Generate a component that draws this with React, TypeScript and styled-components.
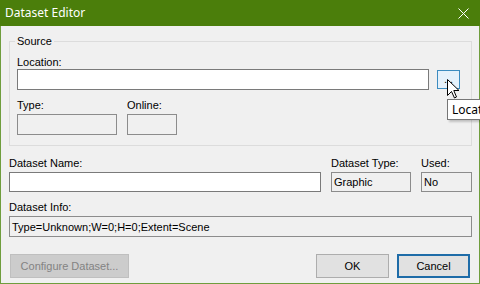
import styled, { createGlobalStyle } from "styled-components";

const Global = createGlobalStyle`
  html, body {
    margin: 0;
    padding: 0;
    overflow: hidden;
    background: #f0f0f0;
  }
`;

const Screen = styled.div`
  position: relative;
  width: 480px;
  height: 284px;
  overflow: hidden;
`;

const Window = styled.div`
  width: 480px;
  height: 284px;
  display: flex;
  flex-direction: column;
  font-family: "Liberation Sans", Arial, sans-serif;
  font-size: 11px;
  color: #000;
`;

const TitleBar = styled.div`
  height: 26px;
  flex: none;
  background: #4b7e0b;
  display: flex;
  align-items: center;
  justify-content: space-between;
  padding: 0 11px 0 5px;
  box-sizing: border-box;
`;

const Title = styled.span`
  font-family: "Noto Sans", "Open Sans", sans-serif;
  font-size: 12px;
  color: #fff;
  line-height: 16px;
`;

const Body = styled.div`
  flex: 1;
  display: flex;
  flex-direction: column;
  background: #f0f0f0;
  border: 1px solid #6f9d3d;
  border-top: none;
  padding: 15px 7px 5px 8px;
`;

const GroupBox = styled.div`
  position: relative;
  height: 105px;
  box-sizing: border-box;
  border: 1px solid #dcdcdc;
  padding: 14px 0 0 7px;
`;

const Legend = styled.span`
  position: absolute;
  left: 5px;
  top: -7px;
  padding: 0 2px;
  line-height: 13px;
  background: #f0f0f0;
`;

const Label = styled.div<{ $gap?: number; $top?: number }>`
  line-height: 13px;
  height: 13px;
  white-space: nowrap;
  margin-top: ${(p) => p.$top ?? 0}px;
  margin-bottom: ${(p) => p.$gap ?? 2}px;
`;

const Row = styled.div<{ $gap: number }>`
  display: flex;
  align-items: center;
  gap: ${(p) => p.$gap}px;
`;

const Field = styled.div<{ $w: number }>`
  width: ${(p) => p.$w}px;
  display: flex;
  flex-direction: column;
`;

const Box = styled.div<{ $h: number; $readOnly?: boolean; $w?: number }>`
  box-sizing: border-box;
  height: ${(p) => p.$h}px;
  width: ${(p) => (p.$w ? `${p.$w}px` : "100%")};
  border: 1px solid ${(p) => (p.$readOnly ? "#8c8c8c" : "#7a7a7a")};
  background: ${(p) => (p.$readOnly ? "#f0f0f0" : "#fff")};
  padding: 0 2px;
  display: flex;
  align-items: center;
  white-space: nowrap;
  overflow: hidden;
`;

const BrowseButton = styled.div`
  box-sizing: border-box;
  width: 23px;
  height: 19px;
  border: 1px solid #3d8cc0;
  background: #e5f1fb;
  display: flex;
  align-items: center;
  justify-content: center;
  line-height: 13px;
`;

const Buttons = styled.div`
  margin-top: 17px;
  display: flex;
  align-items: center;
  justify-content: space-between;
  padding: 0 2px 0 1px;
`;

const Button = styled.div<{ $w: number; $variant?: "disabled" | "focused" }>`
  box-sizing: border-box;
  width: ${(p) => p.$w}px;
  height: 24px;
  display: flex;
  align-items: center;
  justify-content: center;
  background: ${(p) => (p.$variant === "disabled" ? "#cccccc" : "#e1e1e1")};
  border: ${(p) =>
    p.$variant === "focused"
      ? "2px solid #1e6ca8"
      : p.$variant === "disabled"
      ? "1px solid #bfbfbf"
      : "1px solid #adadad"};
  color: ${(p) => (p.$variant === "disabled" ? "#838383" : "#000")};
`;

const RightButtons = styled.div`
  display: flex;
  gap: 8px;
`;

const Tooltip = styled.div`
  position: absolute;
  left: 447px;
  top: 99px;
  height: 21px;
  box-sizing: border-box;
  padding: 0 4px;
  display: flex;
  align-items: center;
  background: #fff;
  border: 1px solid #767676;
  box-shadow: 2px 2px 2px rgba(0, 0, 0, 0.2);
  font-family: "Noto Sans", "Open Sans", sans-serif;
  font-size: 12px;
  white-space: nowrap;
`;

const Cursor = styled.svg`
  position: absolute;
  left: 447px;
  top: 79px;
`;

function CloseIcon() {
  return (
    <svg width="11" height="11" viewBox="0 0 11 11">
      <path d="M0.5 0.5 L10.5 10.5 M10.5 0.5 L0.5 10.5" stroke="#fff" strokeWidth="1" />
    </svg>
  );
}

export default function App() {
  return (
    <Screen>
      <Global />
      <Window>
        <TitleBar>
          <Title>Dataset Editor</Title>
          <CloseIcon />
        </TitleBar>
        <Body>
          <GroupBox>
            <Legend>Source</Legend>
            <Label $gap={0}>Location:</Label>
            <Row $gap={8}>
              <Box $h={21} $w={412} />
              <BrowseButton>...</BrowseButton>
            </Row>
            <Row $gap={10} style={{ marginTop: 9, alignItems: "flex-start" }}>
              <Field $w={100}>
                <Label>Type:</Label>
                <Box $h={21} $readOnly />
              </Field>
              <Field $w={50}>
                <Label>Online:</Label>
                <Box $h={21} $readOnly />
              </Field>
            </Row>
          </GroupBox>
          <Row $gap={10} style={{ marginTop: 11, alignItems: "flex-start" }}>
            <Field $w={312}>
              <Label>Dataset Name:</Label>
              <Box $h={20} />
            </Field>
            <Field $w={80}>
              <Label>Dataset Type:</Label>
              <Box $h={20} $readOnly>Graphic</Box>
            </Field>
            <Field $w={51}>
              <Label>Used:</Label>
              <Box $h={20} $readOnly>No</Box>
            </Field>
          </Row>
          <Label $top={9}>Dataset Info:</Label>
          <Box $h={21} $readOnly>Type=Unknown;W=0;H=0;Extent=Scene</Box>
          <Buttons>
            <Button $w={119} $variant="disabled">Configure Dataset...</Button>
            <RightButtons>
              <Button $w={73}>OK</Button>
              <Button $w={73} $variant="focused">Cancel</Button>
            </RightButtons>
          </Buttons>
        </Body>
      </Window>
      <Tooltip>Location</Tooltip>
      <Cursor width="13" height="20" viewBox="0 0 13 20">
        <path
          d="M0.5 0.5 L0.5 16.5 L4.5 12.5 L7.5 19 L9.5 18 L6.8 11.5 L12 11.5 Z"
          fill="#fff"
          stroke="#000"
          strokeWidth="1"
          strokeLinejoin="miter"
        />
      </Cursor>
    </Screen>
  );
}
